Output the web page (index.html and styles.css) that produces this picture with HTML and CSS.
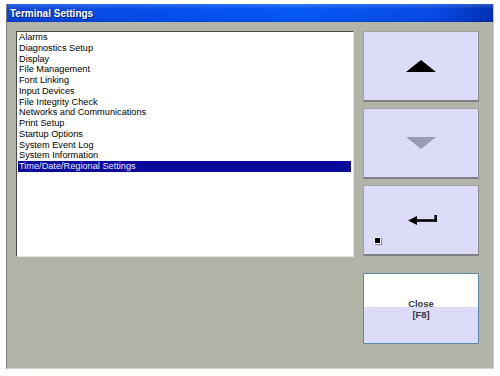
FILE: index.html
```html
<!DOCTYPE html>
<html>
<head>
<meta charset="utf-8">
<link rel="stylesheet" href="styles.css">
</head>
<body>
<div class="window">
  <div class="titlebar"><span class="title">Terminal Settings</span></div>
  <div class="content">
    <div class="listbox">
      <div class="item">Alarms</div>
      <div class="item">Diagnostics Setup</div>
      <div class="item">Display</div>
      <div class="item">File Management</div>
      <div class="item">Font Linking</div>
      <div class="item">Input Devices</div>
      <div class="item">File Integrity Check</div>
      <div class="item">Networks and Communications</div>
      <div class="item">Print Setup</div>
      <div class="item">Startup Options</div>
      <div class="item">System Event Log</div>
      <div class="item">System Information</div>
      <div class="item selected">Time/Date/Regional Settings</div>
    </div>
    <div class="buttons">
      <div class="btn">
        <svg width="30" height="12" viewBox="0 0 30 12"><polygon points="0,12 15,0 30,12" fill="#000"/></svg>
      </div>
      <div class="btn">
        <svg width="30" height="12" viewBox="0 0 30 12"><polygon points="0,0 30,0 15,12" fill="#9a9ab2"/></svg>
      </div>
      <div class="btn enter">
        <svg width="29" height="12" viewBox="0 0 29 12">
          <polygon points="0,6.5 9,2 9,11" fill="#000"/>
          <rect x="8" y="5.2" width="21" height="2.6" fill="#000"/>
          <rect x="26.4" y="1" width="2.6" height="6.8" fill="#000"/>
        </svg>
        <span class="indicator"></span>
      </div>
      <div class="btn close">
        <span class="close-text">Close<br>[F8]</span>
      </div>
    </div>
  </div>
</div>
</body>
</html>
```

FILE: styles.css
```css
html, body {
  margin: 0;
  padding: 0;
  background: #ffffff;
}
body {
  width: 500px;
  height: 376px;
  overflow: hidden;
  font-family: "Liberation Sans", Arial, sans-serif;
}
.window {
  margin: 4px 6px 0 6px;
  width: 488px;
  height: 365px;
  box-sizing: border-box;
  background: #b3b4a8;
  border-left: 1px solid #7c7d76;
  border-right: 1px solid #c8c9c0;
  border-bottom: 1px solid #d4d5cc;
  display: flex;
  flex-direction: column;
}
.titlebar {
  height: 18px;
  flex: none;
  background:
    linear-gradient(to bottom, rgba(255,255,255,0.18) 0%, rgba(255,255,255,0) 30%, rgba(0,0,0,0) 80%, rgba(0,0,40,0.12) 100%),
    linear-gradient(to right, #0a44da 0%, #0450f0 40%, #0558f4 60%, #0848e4 88%, #0030b4 100%);
  display: flex;
  align-items: center;
  padding-left: 3px;
}
.title {
  color: #ffffff;
  font-weight: bold;
  font-size: 10px;
  text-shadow: 1px 1px 0 #0a1f70;
}
.content {
  display: flex;
  padding: 9px 0 0 9px;
  gap: 9px;
  align-items: flex-start;
}
.listbox {
  width: 338px;
  height: 226px;
  box-sizing: border-box;
  background: #ffffff;
  border-top: 1px solid #4a4a4a;
  border-left: 1px solid #4a4a4a;
  border-right: 1px solid #e6e6e0;
  border-bottom: 1px solid #e6e6e0;
  padding: 0 2px 0 1px;
  font-size: 9.2px;
  color: #000;
}
.item {
  height: 10.75px;
  line-height: 10.75px;
  padding-left: 1px;
  white-space: nowrap;
}
.selected {
  background: #0a0a9c;
  color: #e8e8ff;
}
.buttons {
  width: 116px;
  display: flex;
  flex-direction: column;
  gap: 6px;
}
.btn {
  position: relative;
  height: 71px;
  box-sizing: border-box;
  background: #dcdcf8;
  border: 1px solid #a2a2a6;
  border-bottom: 2px solid #7e7e84;
  border-right: 1px solid #8a8a90;
  display: flex;
  align-items: center;
  justify-content: center;
}
.btn.enter svg {
  margin-left: 2px;
}
.indicator {
  position: absolute;
  left: 10px;
  bottom: 10px;
  width: 5px;
  height: 5px;
  background: #000;
  border: 1px solid #f4f4ff;
  box-shadow: 1px 1px 1px #8a8a96;
}
.btn.close {
  margin-top: 11px;
  border: 1px solid #5a86aa;
  border-radius: 1px;
  background: linear-gradient(to bottom, #ffffff 0%, #ffffff 48%, #dcdcf8 48%, #dcdcf8 100%);
}
.close-text {
  font-size: 9.4px;
  font-weight: bold;
  line-height: 11px;
  text-align: center;
  color: #34343c;
  margin-top: 1px;
}
```
